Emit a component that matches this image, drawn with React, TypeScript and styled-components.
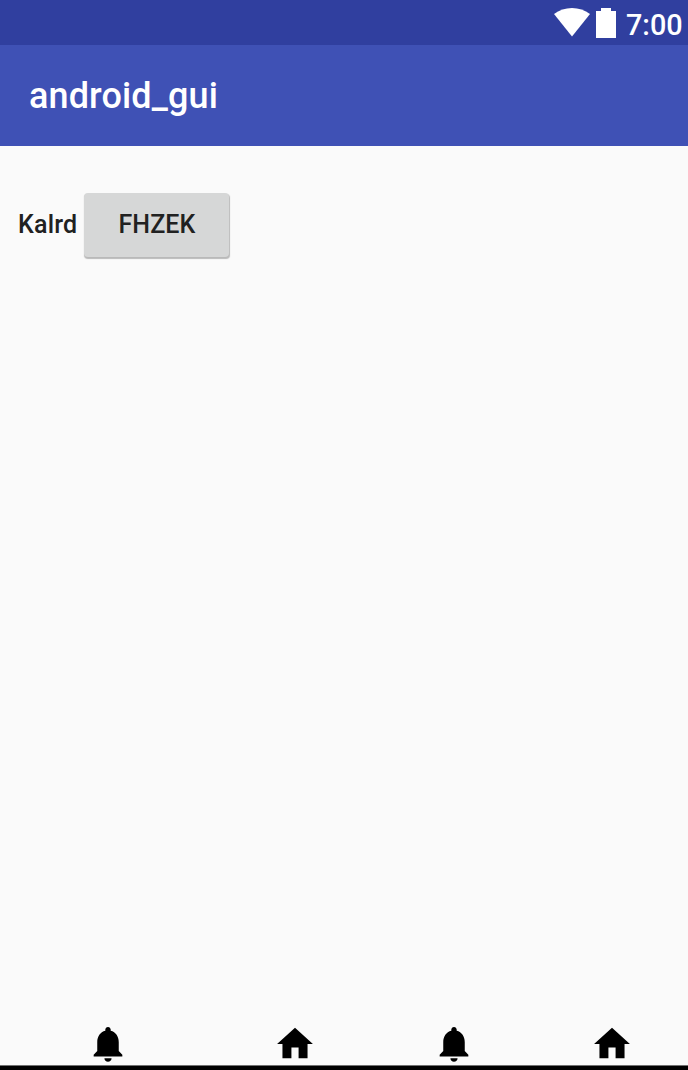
import React from 'react';
import styled, { createGlobalStyle } from 'styled-components';

const GlobalStyle = createGlobalStyle`
  body { margin: 0; background: #fafafa; font-family: Roboto, sans-serif; }
`;

const Screen = styled.div`
  width: 688px;
  height: 1070px;
  box-sizing: border-box;
  display: flex;
  flex-direction: column;
  background: #fafafa;
  overflow: hidden;
`;

const StatusBar = styled.header`
  height: 45px;
  flex: none;
  box-sizing: border-box;
  padding-right: 6px;
  display: flex;
  justify-content: flex-end;
  align-items: flex-start;
  background: #303f9f;
  color: #fff;
`;

const StatusIcon = styled.svg<{ $gap: number }>`
  margin: 8px ${(p) => p.$gap}px 0 0;
  display: block;
  fill: #fff;
`;

const Clock = styled.span`
  width: 56px;
  font-size: 28.8px;
  line-height: 34px;
  margin-top: 8px;
  font-weight: 500;
`;

const AppBar = styled.div`
  height: 101px;
  flex: none;
  display: flex;
  align-items: center;
  padding-left: 29px;
  background: #3f51b5;
`;

const Title = styled.h1`
  margin: 0;
  font-size: 36px;
  line-height: 42px;
  font-weight: 500;
  letter-spacing: 0.12px;
  color: #fff;
`;

const Content = styled.main`
  flex: 1;
  display: flex;
  align-items: flex-start;
  padding: 47px 0 0 18px;
`;

const Label = styled.span`
  width: 66px;
  font-size: 25px;
  line-height: 64px;
  font-weight: 500;
  letter-spacing: 0.2px;
  color: #212121;
`;

const Button = styled.button`
  width: 145px;
  height: 64px;
  padding: 0 0 1px 1px;
  border: 0;
  border-radius: 4px;
  background: #d6d7d7;
  box-shadow: 0.5px 1.5px 1px rgba(0, 0, 0, 0.26);
  font: 500 25px/63px Roboto, sans-serif;
  letter-spacing: 0.1px;
  color: #212121;
`;

const BottomBar = styled.nav`
  flex: none;
  height: 43px;
  display: flex;
  padding-left: 86px;
`;

const BottomEdge = styled.footer`
  flex: none;
  height: 4px;
  border-top: 1px solid #707070;
  background: #000;
`;

const NavIcon = styled.svg<{ $gap: number }>`
  display: block;
  flex: none;
  margin-right: ${(p) => p.$gap}px;
`;

const bell = 'M12 22c1.1 0 2-.9 2-2h-4c0 1.1.89 2 2 2zm6-6v-5c0-3.07-1.64-5.64-4.5-6.32V4c0-.83-.67-1.5-1.5-1.5s-1.5.67-1.5 1.5v.68C7.63 5.36 6 7.92 6 11v5l-2 2v1h16v-1l-2-2z';
const home = 'M10 20v-6h4v6h5v-8h3L12 3 2 12h3v8z';

const items = [
  { path: bell, gap: 143 },
  { path: home, gap: 114.6 },
  { path: bell, gap: 114.2 },
  { path: home, gap: 0 },
];

export default function App() {
  return (
    <>
      <GlobalStyle />
      <Screen>
        <StatusBar>
          <StatusIcon $gap={6} width="36" height="29" viewBox="0 0 36 29">
            <path d="M0 6C10-2 26-2 36 6L18 28.5Z" />
          </StatusIcon>
          <StatusIcon $gap={10} width="20" height="30" viewBox="0 0 20 30">
            <path d="M5 0h10v3h5v27H0V3h5z" />
          </StatusIcon>
          <Clock>7:00</Clock>
        </StatusBar>
        <AppBar>
          <Title>android_gui</Title>
        </AppBar>
        <Content>
          <Label>Kalrd</Label>
          <Button>FHZEK</Button>
        </Content>
        <BottomBar>
          {items.map((item, i) => (
            <NavIcon key={i} $gap={item.gap} width="44" height="43" viewBox="0 -0.25 24 24">
              <path d={item.path} />
            </NavIcon>
          ))}
        </BottomBar>
        <BottomEdge />
      </Screen>
    </>
  );
}
